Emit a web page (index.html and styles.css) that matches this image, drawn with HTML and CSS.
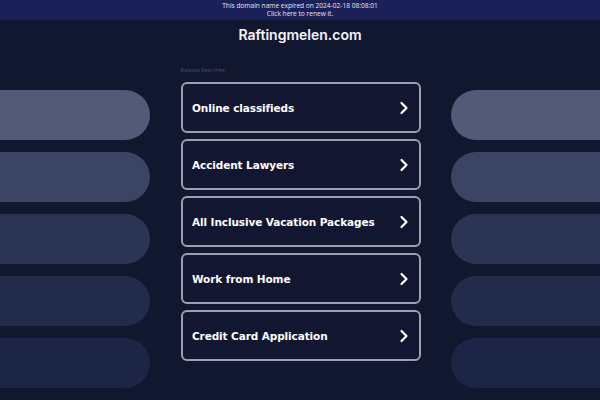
FILE: index.html
```html
<!doctype html>
<html lang="en">
<head>
    <meta charset="utf-8">
    <title>Raftingmelen.com</title>
    <link rel="stylesheet" href="styles.css">
</head>
<body>
<div class="banner">
    This domain name expired on 2024-02-18 08:08:01<br>
    Click here to renew it.
</div>
<h1 class="domain">Raftingmelen.com</h1>
<div class="layout">
    <div class="pills pills-left">
        <div class="pill p1"></div>
        <div class="pill p2"></div>
        <div class="pill p3"></div>
        <div class="pill p4"></div>
        <div class="pill p5"></div>
    </div>
    <div class="searches">
        <div class="related">Related Searches:</div>
        <a class="link" href="#">Online classifieds <svg class="chev" viewBox="0 0 10 14"><path d="M2.5 2 L7.5 7 L2.5 12"/></svg></a>
        <a class="link" href="#">Accident Lawyers <svg class="chev" viewBox="0 0 10 14"><path d="M2.5 2 L7.5 7 L2.5 12"/></svg></a>
        <a class="link" href="#">All Inclusive Vacation Packages <svg class="chev" viewBox="0 0 10 14"><path d="M2.5 2 L7.5 7 L2.5 12"/></svg></a>
        <a class="link" href="#">Work from Home <svg class="chev" viewBox="0 0 10 14"><path d="M2.5 2 L7.5 7 L2.5 12"/></svg></a>
        <a class="link" href="#">Credit Card Application <svg class="chev" viewBox="0 0 10 14"><path d="M2.5 2 L7.5 7 L2.5 12"/></svg></a>
    </div>
    <div class="pills pills-right">
        <div class="pill p1"></div>
        <div class="pill p2"></div>
        <div class="pill p3"></div>
        <div class="pill p4"></div>
        <div class="pill p5"></div>
    </div>
</div>
</body>
</html>
```

FILE: styles.css
```css
html, body {
    margin: 0;
    background-color: #121730;
    height: 400px;
    overflow: hidden;
}
body {
    font-family: "DejaVu Sans", sans-serif;
    color: #fff;
}

.banner {
    background-color: #1c2059;
    height: 20px;
    box-sizing: border-box;
    padding-top: 2px;
    font-family: "Open Sans", sans-serif;
    font-size: 6.6px;
    line-height: 8px;
    text-align: center;
    color: #e4e5f0;
}

.domain {
    margin: 0;
    height: 30px;
    padding-top: 5px;
    font-family: "Inter", sans-serif;
    font-size: 14px;
    font-weight: 600;
    line-height: 20px;
    text-align: center;
    color: #f4f4f8;
}

.layout {
    display: grid;
    grid-template-columns: 150px 1fr 240px 1fr 149px;
    padding-top: 11px;
}
.pills-left {
    grid-column: 1;
}
.searches {
    grid-column: 3;
}
.pills-right {
    grid-column: 5;
}

.pills {
    display: flex;
    flex-direction: column;
    gap: 12.5px;
    padding-top: 24px;
}
.pill {
    height: 49.5px;
}
.pills-left .pill {
    border-radius: 0 25px 25px 0;
}
.pills-right .pill {
    border-radius: 25px 0 0 25px;
}
.p1 { background-color: #525a78; }
.p2 { background-color: #3c4464; }
.p3 { background-color: #2c3454; }
.p4 { background-color: #232b4c; }
.p5 { background-color: #1d2547; }

.searches {
    display: flex;
    flex-direction: column;
    gap: 6px;
}
.related {
    font-family: "Open Sans", sans-serif;
    font-size: 5.5px;
    line-height: 8px;
    color: #4c5170;
    margin-bottom: 2px;
}
.link {
    display: flex;
    align-items: center;
    justify-content: space-between;
    height: 51px;
    box-sizing: border-box;
    padding: 0 10px 0 9.5px;
    border: 2px solid #9d9fb1;
    border-radius: 6px;
    background-color: #121630;
    color: #fff;
    font-size: 10.5px;
    font-weight: bold;
    letter-spacing: -0.1px;
    text-decoration: none;
}
.chev {
    width: 10px;
    height: 14px;
}
.chev path {
    fill: none;
    stroke: #fff;
    stroke-width: 2.2;
    stroke-linecap: round;
    stroke-linejoin: round;
}
```
